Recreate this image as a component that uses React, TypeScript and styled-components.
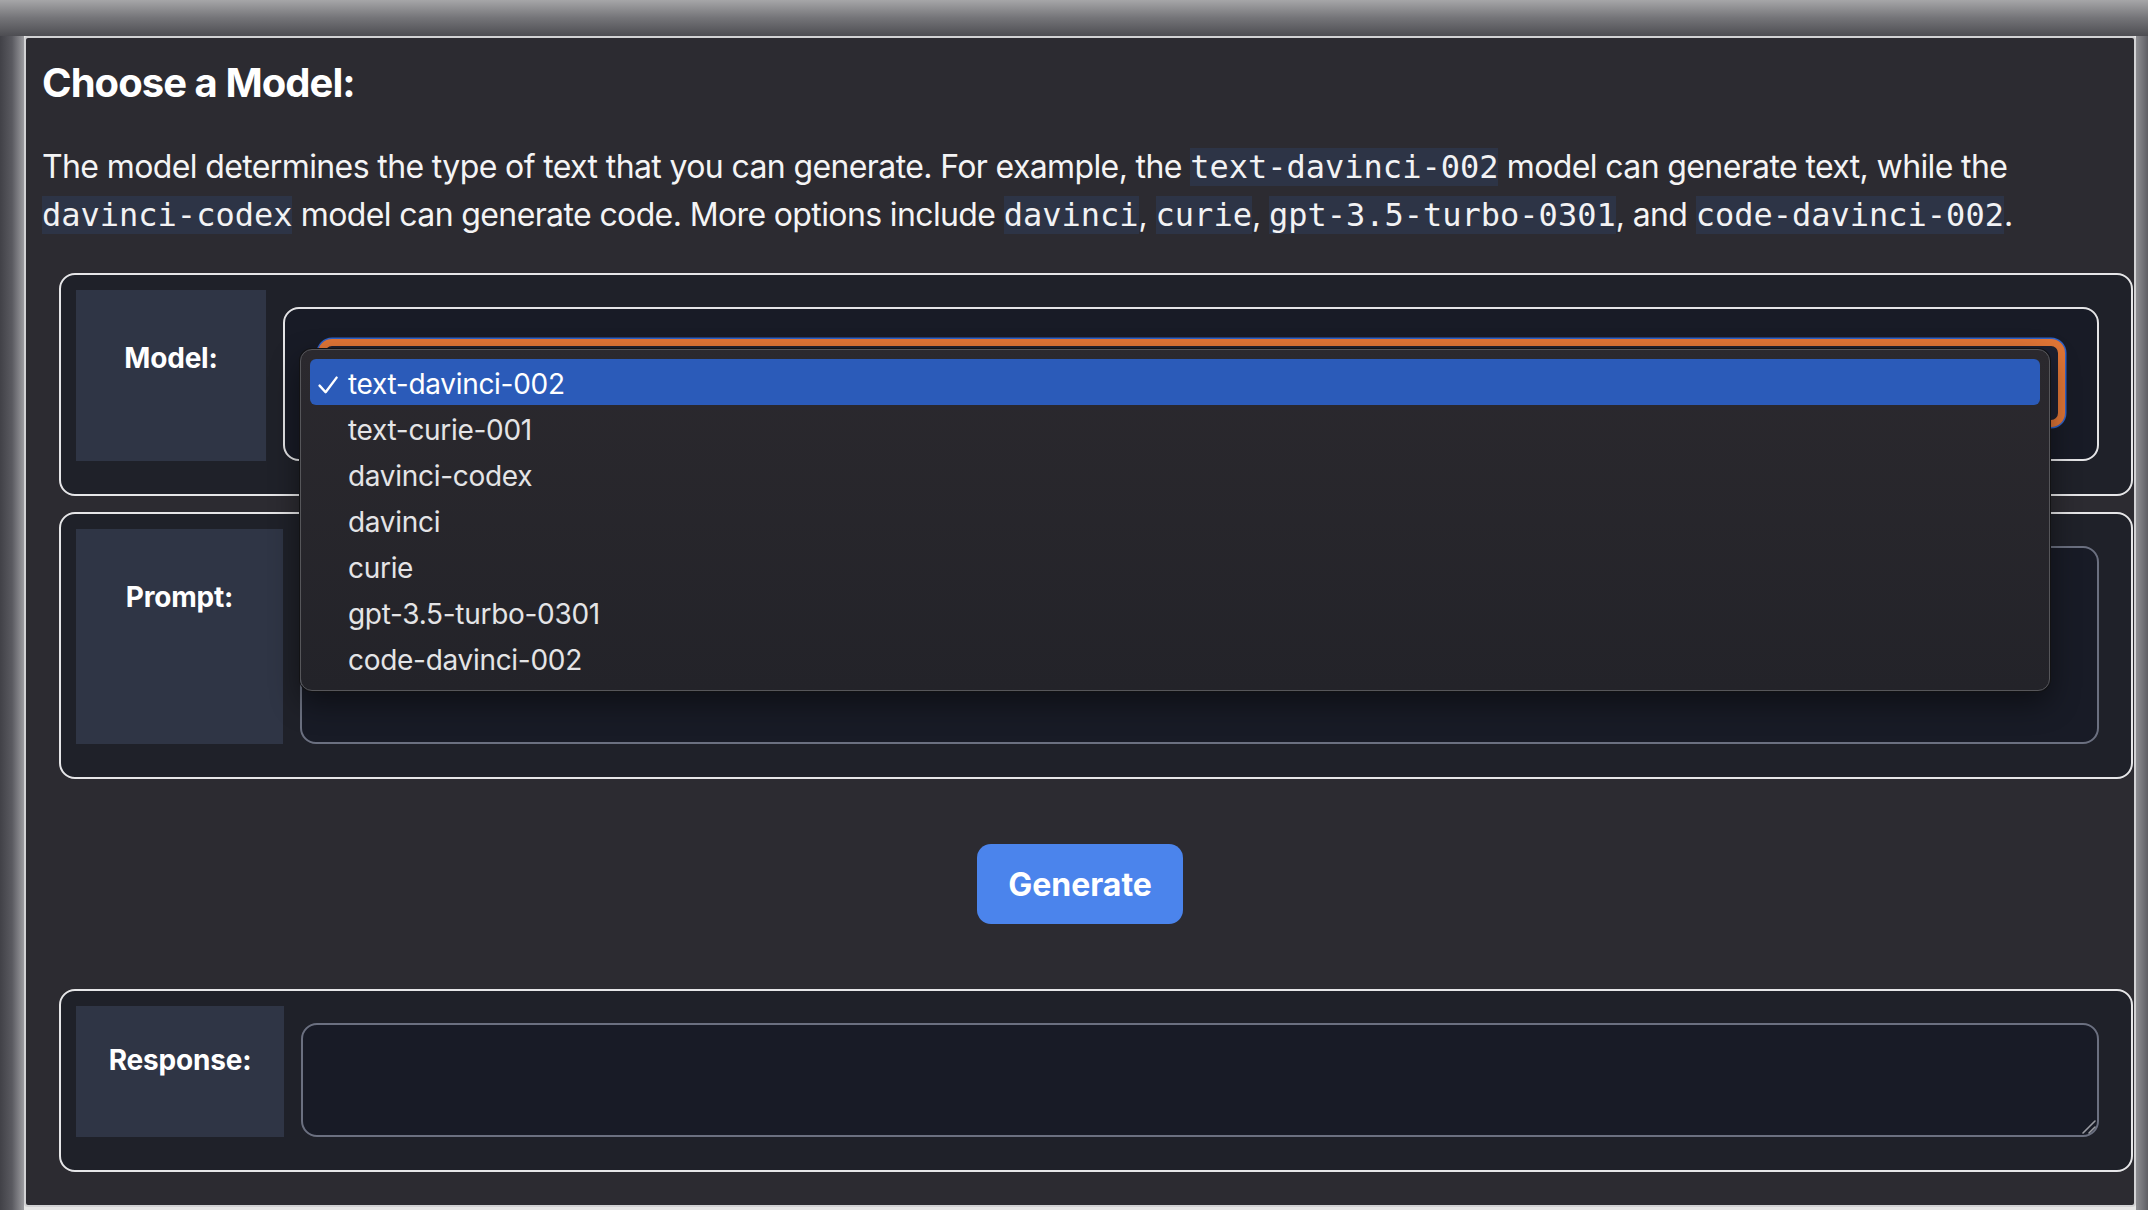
import React from "react";
import styled, { createGlobalStyle } from "styled-components";

const GlobalStyle = createGlobalStyle`
  html, body { margin: 0; padding: 0; }
  body {
    background: #e6e6e6;
    font-family: Inter, "Noto Sans", "Liberation Sans", sans-serif;
  }
  * { box-sizing: border-box; }
`;

const Backdrop = styled.div`
  min-height: 1210px;
  padding: 36px 12px 4px 24px;
  background:
    linear-gradient(to bottom, #a6a6a8 0px, #747478 18px, #4d4d52 36px) top left / 100% 36px no-repeat,
    linear-gradient(to right, #414147 0px, #5a5a60 12px, #9c9ca0 24px) top left / 24px 100% no-repeat,
    linear-gradient(to right, #8e8e92 0px, #5e5e64 12px) top right / 12px 100% no-repeat,
    #e6e6e6;
`;

const Panel = styled.main`
  background: #2c2b31;
  border: 2px solid #d2d2d4;
  border-radius: 4px;
  padding: 0 16px 33px 16px;
  color: #f4f4f5;
`;

const Title = styled.h1`
  margin: 21px 0 0;
  font-size: 40px;
  line-height: 48px;
  font-weight: 700;
  color: #ffffff;
  letter-spacing: -0.95px;
`;

const Intro = styled.p`
  margin: 36px 0 0;
  font-size: 32px;
  line-height: 48px;
  letter-spacing: -0.62px;
  color: #f4f4f5;
`;

const Code = styled.code`
  font-family: "DejaVu Sans Mono", "Liberation Mono", monospace;
  font-size: 32px;
  letter-spacing: 0;
  background: #2d3446;
  color: #f2f2f4;
`;

const Section = styled.section<{ $mt: number }>`
  display: flex;
  align-items: stretch;
  gap: 17px;
  margin: ${(p) => p.$mt}px -15px 0 17px;
  padding: 15px 32px 33px 15px;
  background: #1f2129;
  border: 2px solid #e6e6e8;
  border-radius: 16px;
`;

const FieldLabel = styled.label<{ $w: number; $pt: number }>`
  flex: 0 0 ${(p) => p.$w}px;
  background: #2f3545;
  padding-top: ${(p) => p.$pt}px;
  text-align: center;
  font-size: 28px;
  font-weight: 700;
  line-height: 42px;
  letter-spacing: -0.2px;
  color: #ffffff;
`;

const SelectFrame = styled.div`
  flex: 1;
  margin-top: 17px;
  padding: 30px 32px 32px 33px;
  background: #181b26;
  border: 2px solid #e4e4e6;
  border-radius: 16px;
`;

const SelectBox = styled.div`
  position: relative;
  height: 88px;
  border: 7px solid #e07536;
  border-radius: 14px;
  box-shadow: 0 0 0 1.5px #2f62c8;
  background: #1d2030;
`;

const Menu = styled.ul`
  position: absolute;
  left: -25px;
  right: 8px;
  top: 3px;
  z-index: 10;
  margin: 0;
  padding: 9px;
  list-style: none;
  background: linear-gradient(to bottom, #2b292e, #232329);
  border: 1px solid #56565a;
  border-radius: 12px;
  box-shadow: 0 0 0 1px #121214, 0 12px 30px rgba(0, 0, 0, 0.45);
`;

const MenuItem = styled.li<{ $active?: boolean }>`
  display: flex;
  align-items: center;
  height: 46px;
  padding-top: 4px;
  border-radius: 6px;
  background: ${(p) => (p.$active ? "#2b5bb9" : "transparent")};
  color: ${(p) => (p.$active ? "#ffffff" : "#e4e4e6")};
  font-size: 28px;
  letter-spacing: -0.3px;
`;

const CheckSlot = styled.span`
  flex: 0 0 38px;
  display: flex;
  align-items: center;
  padding: 2px 0 0 8px;
`;

const FieldBox = styled.div`
  position: relative;
  flex: 1;
  display: flex;
  margin-top: 17px;
`;

const TextArea = styled.textarea<{ $h: number }>`
  flex: 1;
  height: ${(p) => p.$h}px;
  background: #181b26;
  border: 2px solid #6b7080;
  border-radius: 16px;
  resize: none;
  color: #f4f4f5;
  font: 28px Inter, sans-serif;
  outline: none;
`;

const Grip = styled.svg`
  position: absolute;
  right: 3px;
  bottom: 3px;
  width: 14px;
  height: 14px;
  pointer-events: none;
`;

const Actions = styled.div`
  display: flex;
  justify-content: center;
  margin: 65px 0;
`;

const GenerateButton = styled.button`
  width: 206px;
  height: 80px;
  background: #4b84ec;
  color: #ffffff;
  border: none;
  border-radius: 14px;
  font-family: Inter, "Noto Sans", sans-serif;
  font-size: 32px;
  font-weight: 700;
  cursor: pointer;
`;

const models = [
  "text-davinci-002",
  "text-curie-001",
  "davinci-codex",
  "davinci",
  "curie",
  "gpt-3.5-turbo-0301",
  "code-davinci-002",
];

const CheckIcon = () => (
  <svg width="20" height="18" viewBox="0 0 20 18" fill="none">
    <path
      d="M1.6 9.6 L7.6 16.2 L18.6 1.6"
      stroke="#ffffff"
      strokeWidth="2.4"
      strokeLinecap="round"
      strokeLinejoin="round"
    />
  </svg>
);

export default function App() {
  return (
    <>
      <GlobalStyle />
      <Backdrop>
        <Panel>
          <Title>Choose a Model:</Title>
          <Intro>
            The model determines the type of text that you can generate. For example, the{" "}
            <Code>text-davinci-002</Code> model can generate text, while the{" "}
            <Code>davinci-codex</Code> model can generate code. More options include{" "}
            <Code>davinci</Code>, <Code>curie</Code>, <Code>gpt-3.5-turbo-0301</Code>, and{" "}
            <Code>code-davinci-002</Code>.
          </Intro>

          <Section $mt={34}>
            <FieldLabel $w={190} $pt={47}>Model:</FieldLabel>
            <SelectFrame>
              <SelectBox>
                <Menu>
                  {models.map((m, i) => (
                    <MenuItem key={m} $active={i === 0}>
                      <CheckSlot>{i === 0 ? <CheckIcon /> : null}</CheckSlot>
                      {m}
                    </MenuItem>
                  ))}
                </Menu>
              </SelectBox>
            </SelectFrame>
          </Section>

          <Section $mt={16}>
            <FieldLabel $w={207} $pt={47}>Prompt:</FieldLabel>
            <FieldBox>
              <TextArea $h={198} />
            </FieldBox>
          </Section>

          <Actions>
            <GenerateButton>Generate</GenerateButton>
          </Actions>

          <Section $mt={0}>
            <FieldLabel $w={208} $pt={33}>Response:</FieldLabel>
            <FieldBox>
              <TextArea $h={114} readOnly />
              <Grip viewBox="0 0 14 14">
                <path d="M1 13 L13 1 M7 13 L13 7" stroke="#9a9ca2" strokeWidth="1.6" strokeLinecap="round" />
              </Grip>
            </FieldBox>
          </Section>
        </Panel>
      </Backdrop>
    </>
  );
}
